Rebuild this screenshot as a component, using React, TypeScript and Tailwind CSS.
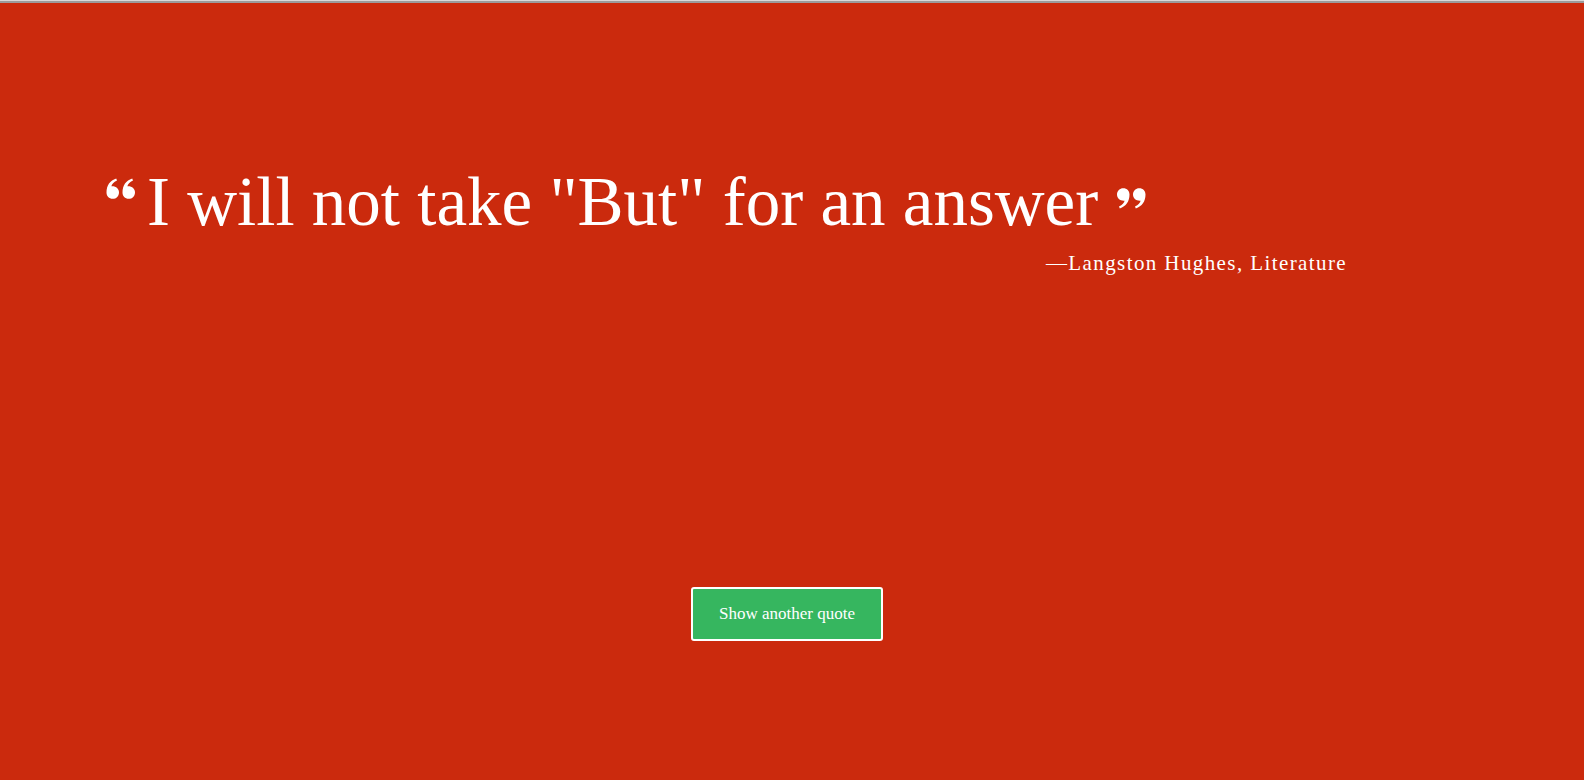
import React from "react";

function QuoteMarks({ flip }: { flip?: boolean }) {
  const mark = "M0.5 14.5 C0.5 7.5 4 2.6 10.2 0.6 L11 2.6 C7.6 4.2 5.8 6.2 5.4 8.3 C9.8 7.9 13 10.6 13 14.4 C13 18.2 10.1 20.8 6.8 20.8 C2.9 20.8 0.5 18.2 0.5 14.5 Z";
  return (
    <svg
      viewBox="0 0 29 21"
      className="w-[29px] h-[21px] shrink-0"
      style={flip ? { transform: "rotate(180deg)" } : undefined}
      fill="white"
    >
      <path d={mark} />
      <path d={mark} transform="translate(16 0)" />
    </svg>
  );
}

export default function App() {
  return (
    <div className="w-[1584px] h-[780px] overflow-hidden bg-[#cb2a0d] flex flex-col" style={{ fontFamily: '"Liberation Serif", serif' }}>
      <div className="h-[1px] bg-[#d9d9d9]" />
      <div className="h-[2px] bg-[#9c9c9c]" />
      <div className="pt-[159px] pl-[106px] pr-[237px] text-white">
        <div className="flex items-start h-[80px]">
          <div className="mt-[16px]"><QuoteMarks /></div>
          <span className="ml-[12px] text-[69px] leading-[80px] whitespace-nowrap">I will not take "But" for an answer</span>
          <div className="mt-[26px] ml-[19px]"><QuoteMarks flip /></div>
        </div>
        <div className="text-right text-[21px] leading-[28px] mt-[7px] tracking-[1.4px]">—Langston Hughes, Literature</div>
      </div>
      <div className="flex justify-center mt-[310px] pr-[10px]">
        <button className="w-[192px] h-[54px] bg-[#36b65f] border-2 border-white rounded-[3px] text-white text-[17px]">Show another quote</button>
      </div>
    </div>
  );
}
